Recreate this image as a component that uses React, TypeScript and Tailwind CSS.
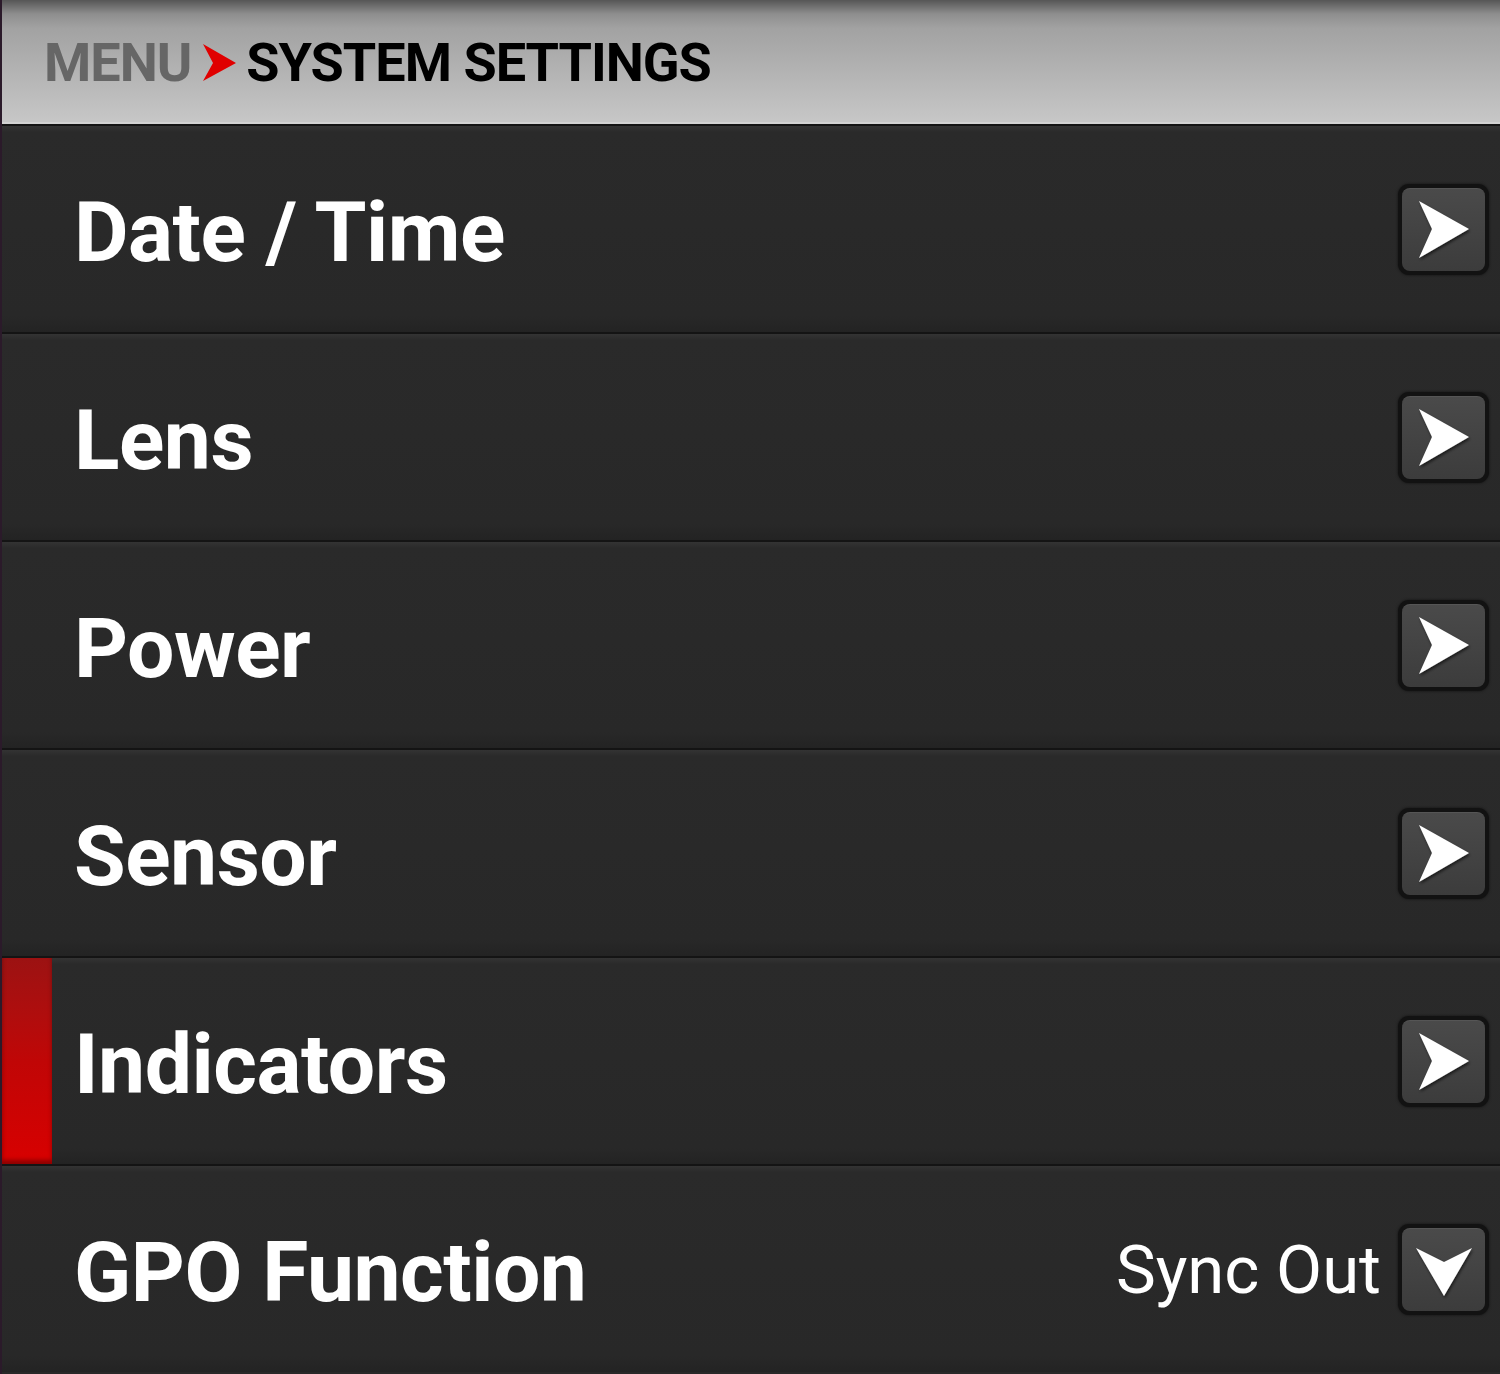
import React from 'react';

type Row = {
  label: string;
  value?: string;
  kind: 'next' | 'drop';
  active?: boolean;
};

const rows: Row[] = [
  { label: 'Date / Time', kind: 'next' },
  { label: 'Lens', kind: 'next' },
  { label: 'Power', kind: 'next' },
  { label: 'Sensor', kind: 'next' },
  { label: 'Indicators', kind: 'next', active: true },
  { label: 'GPO Function', value: 'Sync Out', kind: 'drop' },
];

function ArrowButton({ kind }: { kind: 'next' | 'drop' }) {
  return (
    <div className="w-[91px] h-[91px] rounded-[11px] bg-[#121212] p-[4px] shadow-[0_0_3px_rgba(0,0,0,0.6)]">
      <div className="w-full h-full rounded-[8px] bg-gradient-to-b from-[#4a4a4a] to-[#3c3c3c] border-t border-[#555] flex items-center justify-center">
        <svg width="83" height="83" viewBox="0 0 83 83">
          <defs>
            <filter id={`sh-${kind}`} x="-20%" y="-20%" width="140%" height="140%">
              <feDropShadow dx="1" dy="2" stdDeviation="1.5" floodColor="#000" floodOpacity="0.6" />
            </filter>
          </defs>
          {kind === 'next' ? (
            <polygon points="17,13 67,41 17,70 30,41" fill="#fff" filter={`url(#sh-${kind})`} />
          ) : (
            <polygon points="14,20 42,34 70,20 42,68" fill="#fff" filter={`url(#sh-${kind})`} />
          )}
        </svg>
      </div>
    </div>
  );
}

export default function App() {
  return (
    <div
      className="w-[1500px] h-[1374px] bg-[#282828] border-l-2 border-[#2b1a2a] overflow-hidden"
      style={{ fontFamily: 'Roboto, "Liberation Sans", sans-serif' }}
    >
      <div className="h-[124px] bg-[linear-gradient(to_bottom,#565656_0px,#8e8e8e_14px,#a2a2a2_28px,#c6c6c6_120px)] border-b-2 border-[#d2d2d2] flex items-center pl-[42px] pt-[4px]">
        <span className="text-[54px] font-bold text-[#666666] leading-none tracking-[-1px]">MENU</span>
        <svg width="34" height="38" viewBox="0 0 34 38" className="ml-[12px] mr-[9px]">
          <polygon points="0,0 33,19 0,37 10,19" fill="#e00000" />
        </svg>
        <span className="text-[54px] font-bold text-black leading-none tracking-[-1px]">SYSTEM SETTINGS</span>
      </div>

      {rows.map((r) => (
        <div
          key={r.label}
          className="h-[208px] flex items-stretch border-t-2 border-[#141414] bg-[linear-gradient(to_bottom,#333333_0px,#2a2a2a_6px,#282828_190px,#232323_206px)]"
        >
          <div
            className={`w-[50px] shrink-0 ${
              r.active ? 'bg-gradient-to-b from-[#9c1212] via-[#c00606] to-[#d80000] shadow-[inset_0_-4px_4px_rgba(0,0,0,0.35)]' : ''
            }`}
          />
          <div className="flex-1 flex items-center pl-[22px] pr-[11px]">
            <span className="text-[84px] font-bold text-white leading-none tracking-[-0.5px] pt-[8px]">
              {r.label}
            </span>
            <div className="flex-1" />
            {r.value && (
              <span className="text-[67px] text-white leading-none mr-[17px] pt-[2px]">{r.value}</span>
            )}
            <ArrowButton kind={r.kind} />
          </div>
        </div>
      ))}
    </div>
  );
}
